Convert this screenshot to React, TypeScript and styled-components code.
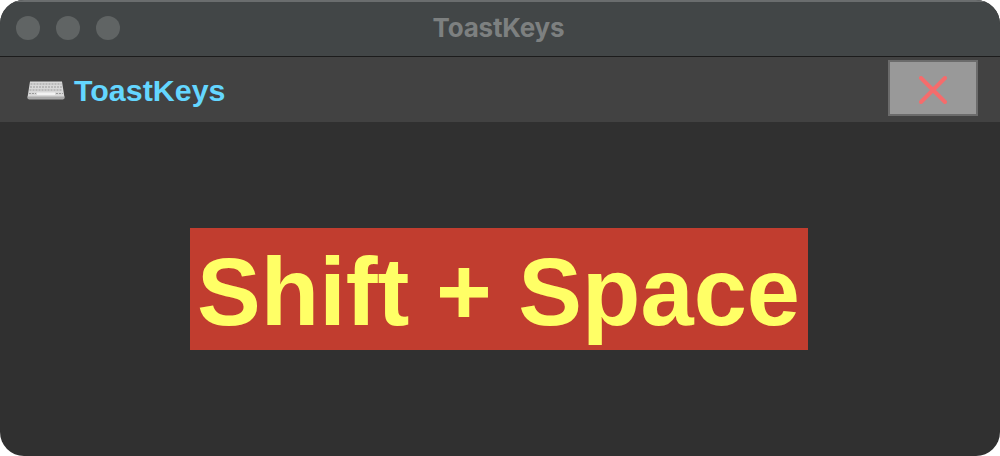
import styled, { createGlobalStyle } from "styled-components";

const GlobalStyle = createGlobalStyle`
	html, body {
		margin: 0;
		padding: 0;
		background: #fff;
	}
`;

const Window = styled.div`
	display: flex;
	flex-direction: column;
	width: 1000px;
	height: 456px;
	overflow: hidden;
	border-radius: 24px;
	background: #303030;
	font-family: "Liberation Sans", Arial, sans-serif;
`;

const TitleBar = styled.div`
	display: grid;
	grid-template-columns: 1fr auto 1fr;
	align-items: center;
	box-sizing: border-box;
	height: 57px;
	padding: 0 16px 2px;
	background: #424647;
	border-top: 2px solid #6a6d6e;
	border-bottom: 1px solid #1c1c1c;
`;

const Lights = styled.div`
	display: flex;
	gap: 16px;
`;

const Light = styled.span`
	width: 24px;
	height: 24px;
	border-radius: 50%;
	background: #606464;
`;

const WindowTitle = styled.div`
	margin: 0 3px 2px 0;
	color: #7d8080;
	font-family: Inter, sans-serif;
	font-size: 26px;
	font-weight: 700;
	letter-spacing: -0.2px;
`;

const Toolbar = styled.div`
	display: flex;
	align-items: center;
	justify-content: space-between;
	box-sizing: border-box;
	height: 65px;
	padding: 0 22px 4px 27px;
	background: #424242;
`;

const Brand = styled.div`
	display: flex;
	align-items: center;
	gap: 9px;
	padding-top: 6px;
	color: #64d6ff;
	font-size: 30.4px;
	font-weight: 700;
`;

const CloseButton = styled.button`
	display: flex;
	align-items: center;
	justify-content: center;
	box-sizing: border-box;
	width: 90px;
	height: 56px;
	padding: 5px 0 0;
	background: #999;
	border: 2px solid #6b6b6b;
`;

const Content = styled.div`
	display: flex;
	flex: 1;
	align-items: center;
	justify-content: center;
`;

const KeyLabel = styled.div`
	box-sizing: border-box;
	width: 618px;
	margin-right: 2px;
	padding: 6px 0 0 7px;
	background: #c13d2f;
	color: #ffff66;
	font-size: 95.6px;
	font-weight: 700;
	line-height: 116px;
	white-space: nowrap;
`;

const KeyboardIcon = () => (
	<svg width="38" height="19" viewBox="0 0 38 19">
		<path d="M3 0.5H35L37.5 16.5H0.5Z" fill="#d8d8d8" />
		<path d="M0.5 15.5H37.5V17.5L36 18.5H2L0.5 17.5Z" fill="#a8a8a8" />
		<g stroke="#9a9a9a" strokeWidth="1" strokeDasharray="2 1">
			<line x1="3.5" y1="3" x2="34.5" y2="3" />
			<line x1="3" y1="6" x2="35" y2="6" />
			<line x1="2.5" y1="9" x2="35.5" y2="9" />
			<line x1="2" y1="12.5" x2="9" y2="12.5" />
			<line x1="29" y1="12.5" x2="36" y2="12.5" />
		</g>
		<rect x="10" y="11.5" width="18" height="2.5" fill="#f2f2f2" />
	</svg>
);

const CloseIcon = () => (
	<svg width="28" height="28" viewBox="0 0 28 28">
		<path d="M2 2L26 26M26 2L2 26" stroke="#f56c6c" strokeWidth="4" strokeLinecap="round" />
	</svg>
);

const App = () => {
	return (
		<Window>
			<GlobalStyle />
			<TitleBar>
				<Lights>
					<Light />
					<Light />
					<Light />
				</Lights>
				<WindowTitle>ToastKeys</WindowTitle>
			</TitleBar>
			<Toolbar>
				<Brand>
					<KeyboardIcon />
					ToastKeys
				</Brand>
				<CloseButton>
					<CloseIcon />
				</CloseButton>
			</Toolbar>
			<Content>
				<KeyLabel>Shift + Space</KeyLabel>
			</Content>
		</Window>
	);
};

export default App;
